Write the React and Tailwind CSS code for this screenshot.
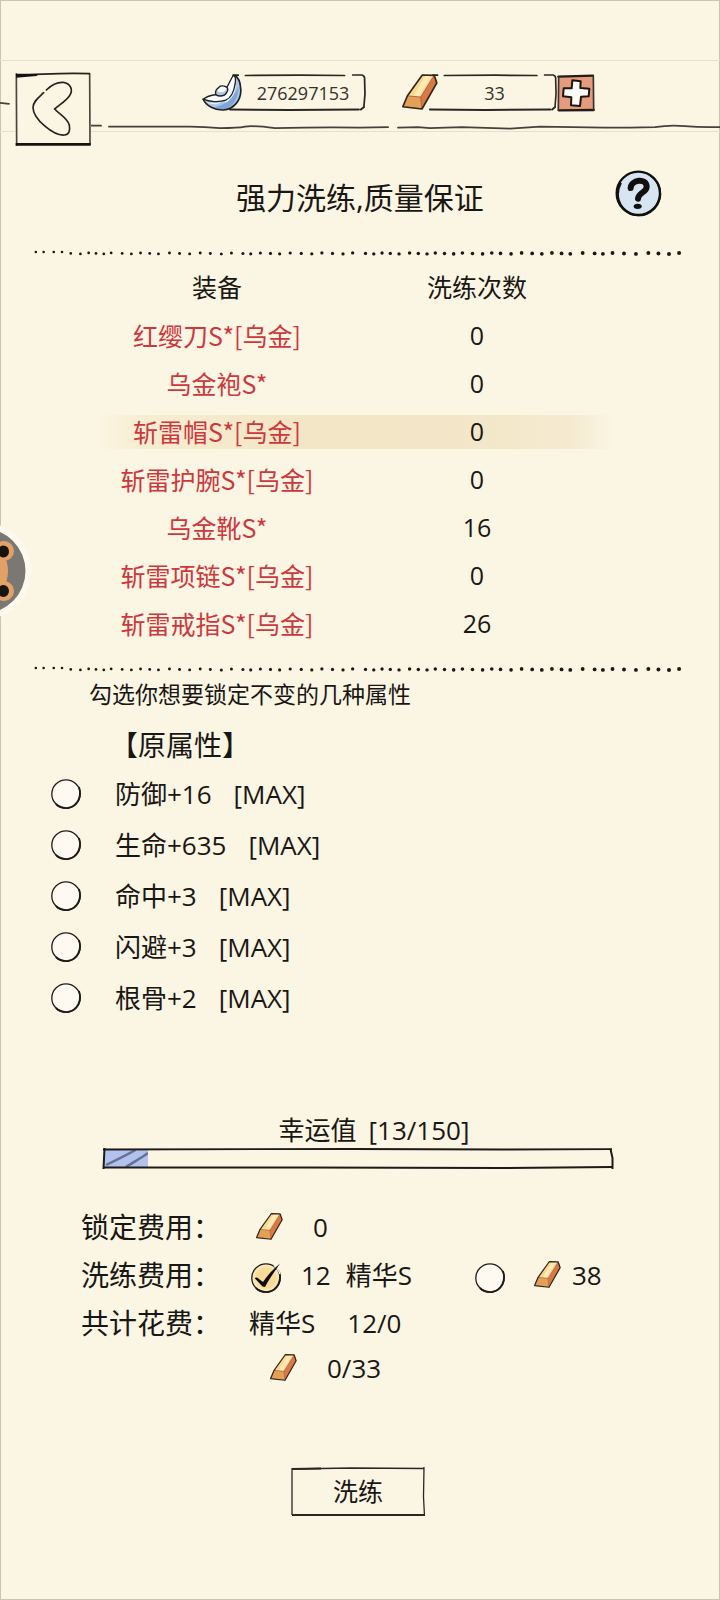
import { useState } from "react";

const equipment = [
  { name: "红缨刀S*[乌金]", count: 0 },
  { name: "乌金袍S*", count: 0 },
  { name: "斩雷帽S*[乌金]", count: 0 },
  { name: "斩雷护腕S*[乌金]", count: 0 },
  { name: "乌金靴S*", count: 16 },
  { name: "斩雷项链S*[乌金]", count: 0 },
  { name: "斩雷戒指S*[乌金]", count: 26 },
];

const attributes = [
  { id: "def", label: "防御+16" },
  { id: "hp", label: "生命+635" },
  { id: "hit", label: "命中+3" },
  { id: "dodge", label: "闪避+3" },
  { id: "bone", label: "根骨+2" },
];

const DOTS = [
  78, 95, 117, 135, 154, 175, 193, 209, 226, 242, 266, 286, 306, 326, 345, 369, 391, 413, 436, 458,
  482, 504, 529, 546, 567, 589, 609, 632, 656, 679, 701, 724, 747, 768, 796, 814, 832, 850, 869, 892,
  911, 930, 948, 968, 988, 1007, 1029, 1051, 1071, 1090, 1113, 1136, 1159, 1180, 1202, 1223, 1242,
  1269, 1295, 1313, 1334, 1359, 1385, 1412, 1434, 1457, 1479,
];

const DottedLine = () => (
  <svg viewBox="0 0 1568 26" className="block w-full" aria-hidden="true">
    {DOTS.map((x, i) => (
      <circle key={x} cx={x} cy={i < 4 ? 11 : 13 + (i % 3)} r={2.8 + (i / DOTS.length) * 1.6} fill="#1b1815" />
    ))}
  </svg>
);

const GoldBar = ({ className }) => (
  <svg viewBox="0 0 108 109" className={className} aria-hidden="true">
    <path d="M61 3 97 4 56 70 16 66Z" fill="#fbd98c" />
    <path d="M72 3 90 4 50 69 34 68Z" fill="#fdeab8" />
    <path d="M16 66 56 70 60 106 2 99Z" fill="#e3a158" />
    <path d="M97 4 105 27 60 106 56 70Z" fill="#d97a46" />
    <path d="M16 66 56 70 97 4M56 70 60 106" fill="none" stroke="#a9552c" strokeWidth="2.5" />
    <path d="M61 3 97 4 105 27 60 106 2 99 16 66Z" fill="none" stroke="#33231a" strokeWidth="5" strokeLinejoin="round" />
  </svg>
);

const SilverIngot = ({ className }) => (
  <svg viewBox="36 43 118 110" className={className} aria-hidden="true">
    <path
      d="M39 118C48 138 74 151 99 150C132 147 151 120 151 91C150 68 143 51 131 47L128 90 80 112Z"
      fill="#a9c8ea"
    />
    <path d="M74 140C100 138 130 118 143 80C147 108 128 146 99 148C88 148 80 145 74 140Z" fill="#7fa6d6" />
    <path d="M136 72C136 96 124 118 104 130C112 112 126 92 136 72Z" fill="#f2f7fc" />
    <path d="M48 127C66 130 80 129 92 126C84 134 66 136 48 127Z" fill="#e4eef9" />
    <path
      d="M39 118C50 109 62 106 78 104L108 84C116 74 121 56 129 47C135 49 136 60 134 72C130 98 120 115 106 121C86 128 58 126 39 118Z"
      fill="#fdfdfd"
      stroke="#23201f"
      strokeWidth="4"
      strokeLinejoin="round"
    />
    <path
      d="M78 90 90 79C98 77 106 79 111 84C114 90 110 99 102 106C94 109 84 109 77 105C75 99 75 94 78 90Z"
      fill="#a9c8ea"
      stroke="#23201f"
      strokeWidth="4"
      strokeLinejoin="round"
    />
    <path d="M81 91 91 82C98 80 104 82 108 86C106 94 100 98 94 97C88 99 83 96 81 91Z" fill="#f8fbfe" />
    <path
      d="M39 118C48 138 74 151 99 150C132 147 151 120 151 91C150 68 143 51 131 47"
      fill="none"
      stroke="#23201f"
      strokeWidth="5"
      strokeLinecap="round"
    />
  </svg>
);

// Open box with brush gaps, the currency icon sits on its left end
const Currency = ({ icon, value, className }) => (
  <div className={`relative flex h-[37px] items-center justify-center ${className}`}>
    <svg
      viewBox="0 0 135 37"
      preserveAspectRatio="none"
      className="absolute right-0 top-0 h-full w-[calc(100%-26px)]"
      fill="none"
      stroke="#2a2723"
      strokeWidth="1.7"
      strokeLinecap="round"
      aria-hidden="true"
    >
      <path d="M5 1.2H10M17 1.5 70 1.2 114 1.5M122 1H131Q134 2 133.600 5L134 20 133 32" />
      <path d="M2 35.500 60 36 128 35.500M130 35.500 133 33" strokeWidth="2" />
    </svg>
    <span className="absolute left-0 top-0">{icon}</span>
    <span className="text-lg leading-none text-[#35312b]">{value}</span>
  </div>
);

const RoundCheck = ({ label, className = "", ...props }) => (
  <span className={`relative block size-[30px] shrink-0 ${className}`}>
    <input
      {...props}
      aria-label={label}
      className="peer block size-full cursor-pointer appearance-none rounded-full bg-[#fefaf2] checked:bg-[radial-gradient(#f9dc98_45%,#fdf0d0_68%)]"
    />
    <svg
      viewBox="0 0 30 30"
      className="pointer-events-none absolute inset-0 size-full"
      fill="none"
      stroke="#1d1a17"
      aria-hidden="true"
    >
      <circle cx="15" cy="15" r="14.200" strokeWidth="1.300" />
      <path d="M28 8C31 17 27 27 17 29C12 29.500 8 28 5 25" strokeWidth="1.800" />
    </svg>
    <svg
      viewBox="0 0 30 30"
      className="pointer-events-none absolute inset-0 hidden size-full overflow-visible peer-checked:block"
      aria-hidden="true"
    >
      <path d="M23 2.500C26 5 28 8 29 11" fill="none" stroke="#fbf5e3" strokeWidth="1.500" />
      <path d="M3.500 15 6 14.500 12 19C17 12 22 6 29 0.500C24 8 18 16 14 24L11.500 23.500Z" fill="#0f0d0b" />
    </svg>
  </span>
);

const Header = () => (
  <header className="relative flex h-[72px] items-start border-y border-[#e6dfcd] px-[15px] pt-[11px]">
    <svg
      viewBox="0 0 720 72"
      preserveAspectRatio="none"
      className="pointer-events-none absolute inset-0 size-full"
      fill="none"
      stroke="#45413b"
      strokeWidth="1.800"
      strokeLinecap="round"
      aria-hidden="true"
    >
      <path d="M0 43 9 44M90 66.500 101 66.500" />
      <path d="M109 67.500 190 67.500Q205 68 220 69 238 69 245 67.500T275 69Q320 68 360 68.500L388 68" />
      <path d="M398 68.500 418 68 430 69 462 68 510 69.500 540 67.500 605 68.500 630 68.500 655 68Q670 65.500 685 67T720 68" />
    </svg>
    <button type="button" aria-label="返回" className="relative h-[74px] w-[76px] shrink-0 cursor-pointer bg-[#fbf5e3]">
      <svg viewBox="45 63 228 222" className="size-full" fill="none" stroke="#26231f" aria-hidden="true">
        <path d="M49 67 50 284M269 66 270 282" strokeWidth="5" stroke="#4a463f" />
        <path d="M48 71C110 72 180 64 270 68" strokeWidth="5" />
        <path d="M48 69 115 69 110 75 48 80Z" fill="#15130f" stroke="none" />
        <path d="M47 280H272" strokeWidth="8" stroke="#15130f" />
        <path
          d="M139 117C154 102 172 93 190 94C212 97 221 118 208 135C198 150 180 160 164 174C178 190 202 200 208 222C211 240 207 251 193 252C162 255 100 205 99 170C99 150 118 138 131 125"
          strokeWidth="5"
          strokeLinecap="round"
        />
      </svg>
    </button>
    <Currency
      value="276297153"
      className="mt-[2px] ml-[111px] w-[164px] pl-[38px]"
      icon={<SilverIngot className="h-[37px] w-[40px]" />}
    />
    <Currency value="33" className="mt-[2px] ml-9 w-[155px] pl-[30px]" icon={<GoldBar className="size-9" />} />
    <button type="button" aria-label="增加" className="mt-[2px] size-[38px] shrink-0 cursor-pointer">
      <svg viewBox="0 0 114 114" className="size-full" aria-hidden="true">
        <rect x="5" y="5" width="104" height="104" rx="6" fill="#e69b7c" />
        <path d="M4 8 108 5 M5 109 110 108" stroke="#211c18" strokeWidth="7" strokeLinecap="round" />
        <path d="M5 9 4 108M109 7 110 107" stroke="#3a322b" strokeWidth="5" strokeLinecap="round" />
        <path
          d="M46 19 71 22 70 42 97 44 95 67 72 68 69 96 42 94 43 70 18 67 20 43 44 43Z"
          fill="#fffdf8"
          stroke="#1b1714"
          strokeWidth="6"
          strokeLinejoin="round"
        />
      </svg>
    </button>
  </header>
);

const App = () => {
  const [selected, setSelected] = useState(2);
  const [locked, setLocked] = useState([]);
  const [payment, setPayment] = useState("essence");
  const luck = 13;
  const luckMax = 150;

  const toggleLock = (id) => {
    setLocked((prev) => (prev.includes(id) ? prev.filter((x) => x !== id) : [...prev, id]));
  };

  return (
    <div className="relative min-h-screen bg-[#fbf5e3] pt-[60px] pb-[80px] font-['Open_Sans','Noto_Sans_CJK_SC',sans-serif] text-[25px] text-[#191714] ring-1 ring-inset ring-[#cbc4b3]">
      <Header />

      {/* Title */}
      <div className="mt-[38px] grid grid-cols-[1fr_auto_1fr] items-start px-[58px]">
        <h1 className="col-start-2 text-[30px] leading-[56px]">强力洗练,质量保证</h1>
        <button type="button" aria-label="帮助" className="size-[47px] cursor-pointer justify-self-end">
          <svg viewBox="0 0 141 141" className="size-full" fill="none" stroke="#11100e" aria-hidden="true">
            <circle cx="70" cy="70" r="65" fill="#d6e5f1" strokeWidth="7" />
            <path d="M18 38C0 72 8 112 48 132C92 146 132 118 136 74C136 48 124 28 106 16" strokeWidth="6" />
            <path d="M47 54C48 30 94 22 95 50C95 68 71 66 69 86" strokeWidth="18" strokeLinecap="round" />
            <ellipse cx="68" cy="109" rx="12" ry="8" fill="#11100e" stroke="none" />
          </svg>
        </button>
      </div>

      <div className="mt-[21px]">
        <DottedLine />
      </div>

      {/* Equipment */}
      <div className="mt-[5px] mb-[15px] pl-[87px] pr-[107px]">
        <table className="w-full table-fixed text-center">
          <thead>
            <tr className="h-12">
              <th className="w-[260px] p-0 font-normal leading-none">装备</th>
              <th className="w-[260px] p-0 font-normal leading-none">洗练次数</th>
              <th className="p-0" aria-hidden="true" />
            </tr>
          </thead>
          <tbody>
            {equipment.map((item, i) => (
              <tr
                key={item.name}
                onClick={() => setSelected(i)}
                className={`h-12 cursor-pointer ${
                  selected === i
                    ? "bg-[linear-gradient(90deg,transparent_2%,#f7edd2_10%,#f3e6c6_40%,#f3e6c8_70%,#f5ead0_92%,transparent)] bg-[length:100%_34px] bg-center bg-no-repeat"
                    : ""
                }`}
              >
                <td className="p-0 font-['Noto_Sans_CJK_SC',sans-serif] leading-none text-[#cb383d]">{item.name}</td>
                <td className="p-0 leading-none">{item.count}</td>
                <td className="p-0" />
              </tr>
            ))}
          </tbody>
        </table>
      </div>

      <DottedLine />

      {/* Attribute locks */}
      <p className="mt-[3px] pl-[89px] text-[23px] leading-8">勾选你想要锁定不变的几种属性</p>
      <h2 className="mt-[15px] pl-[110px] text-[28px] leading-10">【原属性】</h2>
      <ul className="mt-1">
        {attributes.map((attr) => (
          <li key={attr.id} className="h-[51px]">
            <label className="flex h-full cursor-pointer items-center gap-[34px] px-[51px]">
              <RoundCheck
                type="checkbox"
                label={attr.label}
                checked={locked.includes(attr.id)}
                onChange={() => toggleLock(attr.id)}
              />
              <span className="flex gap-[22px] text-[26px] leading-none">
                <span>{attr.label}</span>
                <span>[MAX]</span>
              </span>
            </label>
          </li>
        ))}
      </ul>

      {/* Luck */}
      <div className="mt-[88px] pl-[102px] pr-[106px]">
        <div className="flex justify-center gap-3 pl-8 text-[26px] leading-9">
          <span>幸运值</span>
          <span>
            [{luck}/{luckMax}]
          </span>
        </div>
        <div
          role="progressbar"
          aria-label="幸运值"
          aria-valuenow={luck}
          aria-valuemax={luckMax}
          className="relative h-[21px] p-0.5"
        >
          <div className="h-full overflow-hidden bg-[#b2c1ee]" style={{ width: `${(luck / luckMax) * 100}%` }}>
            <svg viewBox="0 0 42 17" preserveAspectRatio="none" className="size-full" fill="none" stroke="#66728f" strokeWidth="2.500" aria-hidden="true">
              <path d="M2 15C10 11 20 6 30 0M21 17C28 12 36 8 42 3" />
            </svg>
          </div>
          <svg
            viewBox="0 0 512 21"
            preserveAspectRatio="none"
            className="absolute inset-0 size-full"
            fill="none"
            stroke="#1d1a17"
            aria-hidden="true"
          >
            <path d="M1 1.500 250 1 400 1.500 510 1.200" strokeWidth="1.800" />
            <path d="M1 19.500 200 19.500 400 20 510 19" strokeWidth="2" />
            <path d="M2.500 0 1.500 21M508.500 1 510.500 10 510.500 21" strokeWidth="2" />
          </svg>
        </div>
      </div>

      {/* Costs */}
      <div className="mt-[34px] grid grid-cols-[168px_1fr] pl-[81px] text-[26px] leading-none">
        <div className="flex h-12 items-center text-[28px]">锁定费用：</div>
        <div className="flex items-center pl-[7px]">
          <GoldBar className="size-[27px]" />
          <span className="pl-[30px]">0</span>
        </div>

        <div className="flex h-12 items-center text-[28px]">洗练费用：</div>
        <div className="flex items-center pl-[2px]">
          <label className="flex w-[224px] cursor-pointer items-center">
            <RoundCheck
              type="radio"
              name="payment"
              label="精华S"
              className="mt-1.5"
              checked={payment === "essence"}
              onChange={() => setPayment("essence")}
            />
            <span className="pl-5">12</span>
            <span className="pl-[15px]">精华S</span>
          </label>
          <label className="flex cursor-pointer items-center">
            <RoundCheck
              type="radio"
              name="payment"
              label="金条"
              className="mt-1.5"
              checked={payment === "gold"}
              onChange={() => setPayment("gold")}
            />
            <GoldBar className="ml-[29px] size-[27px]" />
            <span className="pl-[11px]">38</span>
          </label>
        </div>

        <div className="flex h-12 items-center text-[28px]">共计花费：</div>
        <div className="flex items-center gap-8">
          <span>精华S</span>
          <span>12/0</span>
        </div>

        <div className="col-start-2 flex h-[42px] items-center pl-[21px]">
          <GoldBar className="size-[27px]" />
          <span className="pl-[30px]">0/33</span>
        </div>
      </div>

      <div className="mt-[78px] flex justify-center pr-1">
        <button type="button" className="relative h-[49px] w-[134px] cursor-pointer leading-none">
          <svg
            viewBox="0 0 134 49"
            preserveAspectRatio="none"
            className="absolute inset-0 size-full"
            fill="none"
            stroke="#2a2723"
            aria-hidden="true"
          >
            <path d="M1 2 60 1 133 1.500M1 1V48M133 0 132.500 30 133.500 49" strokeWidth="1.300" />
            <path d="M1 2 30 1.500" strokeWidth="2" />
            <path d="M1 48H134" strokeWidth="2" />
          </svg>
          洗练
        </button>
      </div>

      {/* Floating mascot docked on the left edge */}
      <button type="button" aria-label="悬浮球" className="absolute left-0 top-[515px] h-[112px] w-[34px] cursor-pointer">
        <svg viewBox="0 0 34 112" className="size-full" aria-hidden="true">
          <circle cx="-17" cy="56" r="48.500" fill="#fdf9ee" />
          <circle cx="-17" cy="56" r="42.500" fill="#7b7772" />
          <circle cx="4" cy="36" r="10" fill="#e2a267" />
          <circle cx="4" cy="76" r="10" fill="#e2a267" />
          <ellipse cx="-12" cy="56" rx="20" ry="26" fill="#e2a267" />
          <ellipse cx="3.500" cy="36.500" rx="5.500" ry="6" fill="#17130f" />
          <ellipse cx="3.500" cy="76" rx="5.500" ry="6" fill="#17130f" />
        </svg>
      </button>
    </div>
  );
};

export default App;
